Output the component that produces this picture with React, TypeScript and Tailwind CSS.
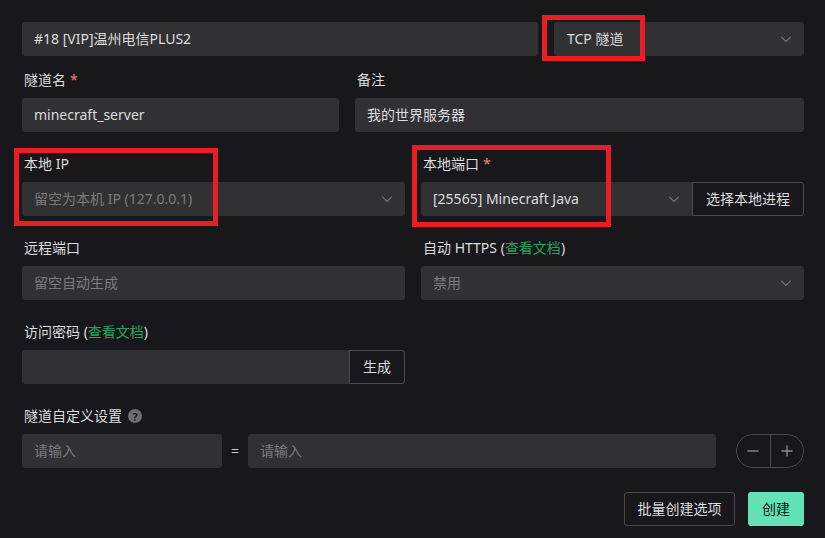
import type { ReactNode } from 'react';

const Chevron = () => (
    <svg className="w-4 h-4 text-[#707073] shrink-0" viewBox="0 0 16 16" fill="none" stroke="currentColor">
        <path d="M3.5 6l4.5 4.5L12.5 6" strokeWidth={1.1} strokeLinecap="round" strokeLinejoin="round" />
    </svg>
);

const Label = ({ children, required }: { children: ReactNode; required?: boolean }) => (
    <div className="h-5 mb-2 flex items-center text-sm text-[#dcdcdd] leading-5 pl-[2px]">
        {children}
        {required && <span className="ml-1 text-[#e88080]">*</span>}
    </div>
);

const Field = ({
    children,
    className = '',
    muted
}: {
    children?: ReactNode;
    className?: string;
    muted?: boolean;
}) => (
    <div
        className={`h-[34px] rounded-[3px] bg-[#313134] px-3 flex items-center text-sm ${muted ? 'text-[#7b7b7e]' : 'text-[#dcdcdd]'} ${className}`}
    >
        {children}
    </div>
);

const OutlineButton = ({ children, className = '' }: { children: ReactNode; className?: string }) => (
    <button
        type="button"
        className={`h-[34px] border border-[#4a4a4e] text-sm text-[#dcdcdd] flex items-center justify-center shrink-0 ${className}`}
    >
        {children}
    </button>
);

const Link = () => (
    <>
        &nbsp;(<span className="text-[#27a25f]">查看文档</span>)
    </>
);

export default function App() {
    return (
        <div
            className="relative w-[825px] h-[538px] bg-[#18181c] pl-[22px] pr-[21px] pt-[22px] overflow-hidden"
            style={{ fontFamily: '"Noto Sans", "Noto Sans CJK SC", sans-serif' }}
        >
            {/* node + type */}
            <div className="flex gap-4">
                <Field className="w-[516px]">#18 [VIP]温州电信PLUS2</Field>
                <Field className="flex-1 justify-between pr-[10px]">
                    <span className="pl-[1px]">TCP 隧道</span>
                    <Chevron />
                </Field>
            </div>

            {/* name + note */}
            <div className="flex gap-4 mt-[14px]">
                <div className="w-[317px]">
                    <Label required>隧道名</Label>
                    <Field>minecraft_server</Field>
                </div>
                <div className="flex-1">
                    <Label>备注</Label>
                    <Field>我的世界服务器</Field>
                </div>
            </div>

            {/* local ip + port */}
            <div className="grid grid-cols-2 gap-4 mt-[22px]">
                <div>
                    <Label>本地 IP</Label>
                    <Field muted className="justify-between pr-[10px] bg-[#2e2e31]">
                        <span>留空为本机 IP (127.0.0.1)</span>
                        <Chevron />
                    </Field>
                </div>
                <div>
                    <Label required>本地端口</Label>
                    <div className="flex">
                        <Field className="flex-1 justify-between pr-[10px] rounded-r-none">
                            <span>[25565] Minecraft Java</span>
                            <Chevron />
                        </Field>
                        <OutlineButton className="w-[112px] rounded-r-[3px]">选择本地进程</OutlineButton>
                    </div>
                </div>
            </div>

            {/* remote port + https */}
            <div className="grid grid-cols-2 gap-4 mt-[22px]">
                <div>
                    <Label>远程端口</Label>
                    <Field muted>留空自动生成</Field>
                </div>
                <div>
                    <Label>
                        自动 HTTPS<Link />
                    </Label>
                    <Field muted className="justify-between pr-[10px]">
                        <span>禁用</span>
                        <Chevron />
                    </Field>
                </div>
            </div>

            {/* password */}
            <div className="grid grid-cols-2 gap-4 mt-[22px]">
                <div>
                    <Label>
                        访问密码<Link />
                    </Label>
                    <div className="flex">
                        <Field className="flex-1 rounded-r-none" />
                        <OutlineButton className="w-[56px] rounded-r-[3px]">生成</OutlineButton>
                    </div>
                </div>
            </div>

            {/* custom settings */}
            <div className="mt-[22px]">
                <Label>
                    隧道自定义设置
                    <span className="ml-[6px] w-[14px] h-[14px] rounded-full bg-[#6e6e71] text-[#18181c] text-[11px] font-bold flex items-center justify-center leading-none">
                        ?
                    </span>
                </Label>
                <div className="flex items-center">
                    <Field muted className="w-[200px]">请输入</Field>
                    <span className="w-[26px] text-center text-sm text-[#cfcfd0]">=</span>
                    <Field muted className="w-[468px]">请输入</Field>
                    <div className="ml-auto flex h-[34px] w-[68px] rounded-full border border-[#4a4a4e]">
                        <div className="flex-1 flex items-center justify-center border-r border-[#4a4a4e] text-[#8a8a8d]">
                            <svg className="w-[14px] h-[14px]" viewBox="0 0 14 14" stroke="currentColor" strokeWidth={1.4}>
                                <path d="M1.5 7h11" />
                            </svg>
                        </div>
                        <div className="flex-1 flex items-center justify-center text-[#8a8a8d]">
                            <svg className="w-[14px] h-[14px]" viewBox="0 0 14 14" stroke="currentColor" strokeWidth={1.4}>
                                <path d="M1.5 7h11M7 1.5v11" />
                            </svg>
                        </div>
                    </div>
                </div>
            </div>

            {/* actions */}
            <div className="flex justify-end gap-[13px] mt-6">
                <OutlineButton className="w-[111px] rounded-[3px]">批量创建选项</OutlineButton>
                <button
                    type="button"
                    className="h-[34px] w-[56px] rounded-[3px] bg-[#63e2b7] text-sm text-[#111] flex items-center justify-center"
                >
                    创建
                </button>
            </div>

            {/* annotation boxes */}
            <div className="absolute left-[542px] top-[15px] w-[103px] h-[46px] border-[5px] border-[#ea1c26]" />
            <div className="absolute left-[14px] top-[148px] w-[204px] h-[78px] border-[5px] border-[#ea1c26]" />
            <div className="absolute left-[412px] top-[145px] w-[199px] h-[82px] border-[5px] border-[#ea1c26]" />
        </div>
    );
}
